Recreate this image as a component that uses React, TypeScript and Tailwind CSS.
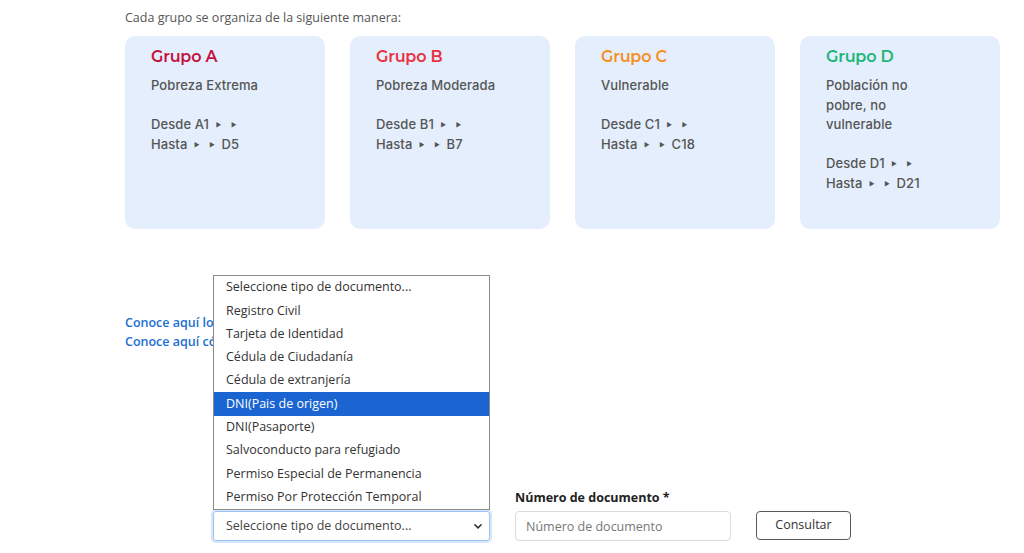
const groups = [
  { name: 'Grupo A', color: 'text-[#c4123f]', desc: ['Pobreza Extrema'], from: 'A1', to: 'D5' },
  { name: 'Grupo B', color: 'text-[#e8323f]', desc: ['Pobreza Moderada'], from: 'B1', to: 'B7' },
  { name: 'Grupo C', color: 'text-[#f7901e]', desc: ['Vulnerable'], from: 'C1', to: 'C18' },
  { name: 'Grupo D', color: 'text-[#1cb77a]', desc: ['Población no', 'pobre, no', 'vulnerable'], from: 'D1', to: 'D21' },
]

const docTypes = [
  'Seleccione tipo de documento...',
  'Registro Civil',
  'Tarjeta de Identidad',
  'Cédula de Ciudadanía',
  'Cédula de extranjería',
  'DNI(Pais de origen)',
  'DNI(Pasaporte)',
  'Salvoconducto para refugiado',
  'Permiso Especial de Permanencia',
  'Permiso Por Protección Temporal',
]

function Tri() {
  return <span className="mx-[3px] inline-block align-middle text-[6px] leading-none">▶</span>
}

function GroupCard({ g }: { g: (typeof groups)[number] }) {
  return (
    <div className="h-[193px] w-[200px] rounded-[10px] bg-[#e4eefc] px-[26px] pt-[9px]">
      <h3 className={`font-['Montserrat','Inter',sans-serif] text-[16px] font-semibold leading-[24px] tracking-[-0.2px] ${g.color}`}>
        {g.name}
      </h3>
      <div className="mt-[7px] font-['Inter',sans-serif] text-[13px] font-medium leading-[19.5px] tracking-[0.1px] text-[#555]">
        {g.desc.map((d) => (
          <div key={d}>{d}</div>
        ))}
        <div className="h-[19.5px]" />
        <div>
          Desde {g.from}{' '}
          <Tri />{' '}
          <Tri />
        </div>
        <div>
          Hasta{' '}
          <Tri />{' '}
          <Tri />{' '}
          {g.to}
        </div>
      </div>
    </div>
  )
}

export default function App() {
  return (
    <div className="min-h-[553px] bg-white pl-[125px] pt-[8px] font-['Open_Sans',sans-serif]">
      <p className="text-[12.5px] leading-[20px] text-[#555]">Cada grupo se organiza de la siguiente manera:</p>
      <div className="mt-[8px] flex gap-[25px]">
        {groups.map((g) => (
          <GroupCard key={g.name} g={g} />
        ))}
      </div>

      <div className="mt-[84px] text-[12.5px] font-semibold leading-[19px] text-[#1a6fd0]">
        <div>Conoce aquí los grupos del Sisbén IV</div>
        <div>Conoce aquí cómo consultar tu puntaje</div>
      </div>

      <div className="mt-[138px] flex items-end">
        <div className="relative ml-[88px] w-[277px]">
          <div className="absolute bottom-full left-0 mb-px h-[235px] w-[277px] border border-[#8a8a8a] bg-white text-[12.5px] text-[#333]">
            {docTypes.map((t, i) => (
              <div
                key={t}
                className={`flex h-[23.3px] items-center pl-3 ${i === 5 ? 'bg-[#1a65d1] text-white' : ''}`}
              >
                {t}
              </div>
            ))}
          </div>
          <div className="flex h-[30px] items-center justify-between rounded-[3px] border border-[#9dc4f5] pl-3 pr-[6px] text-[12.5px] text-[#444] shadow-[0_0_0_2px_#d6e6fb]">
            <span>Seleccione tipo de documento...</span>
            <svg width="10" height="10" viewBox="0 0 16 16" fill="none" stroke="#333" strokeWidth="2.5" strokeLinecap="round" strokeLinejoin="round">
              <path d="M3 6l5 5 5-5" />
            </svg>
          </div>
        </div>

        <div className="ml-[25px] w-[216px]">
          <label className="block text-[12.5px] font-bold leading-[18px] text-[#222]">Número de documento *</label>
          <input
            placeholder="Número de documento"
            className="mt-[4px] h-[30px] w-[216px] rounded-[4px] border border-[#dcdcdc] px-[10px] text-[12.5px] text-[#333] outline-none placeholder:text-[#777]"
          />
        </div>

        <button className="mb-px ml-[25px] h-[29px] w-[95px] rounded-[4px] border border-[#5a5a5a] bg-white text-[12.5px] text-[#333]">
          Consultar
        </button>
      </div>
    </div>
  )
}
